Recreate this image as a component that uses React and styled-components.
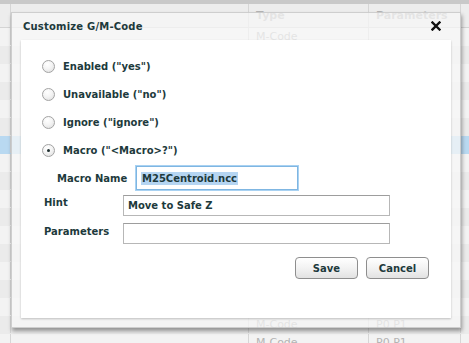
import React from "react";
import styled, { createGlobalStyle } from "styled-components";

const GlobalStyle = createGlobalStyle`
  html, body {
    margin: 0;
    padding: 0;
    width: 469px;
    height: 343px;
    overflow: hidden;
    background: #f2f2f2;
    font-family: "DejaVu Sans", Verdana, sans-serif;
  }
`;

const Page = styled.div`
  position: relative;
  width: 469px;
  height: 343px;
  overflow: hidden;
`;

const TopStrip = styled.div`
  height: 4px;
  background: #c9c9c9;
`;

const Row = styled.div`
  display: grid;
  grid-template-columns: 10px 238px 120px 92px 9px;
  height: ${({ $h }) => $h || 18}px;
  background: ${({ $bg }) => $bg};
  border-bottom: 1px solid ${({ $line }) => $line || "transparent"};
  box-sizing: border-box;
`;

const Cell = styled.div`
  border-left: 1px solid #d6d6d6;
  padding-left: 7px;
  display: flex;
  align-items: center;
  font-size: 11px;
  font-weight: ${({ $bold }) => ($bold ? 700 : 400)};
  color: #b4b4b4;
  white-space: nowrap;
  overflow: hidden;
  &:first-child {
    border-left: none;
  }
`;

const Overlay = styled.div`
  position: absolute;
  left: 11px;
  top: 12px;
  width: 450px;
  height: 316px;
  box-sizing: border-box;
  background: rgba(246, 246, 246, 0.72);
  border: 1px solid rgba(190, 190, 190, 0.7);
  box-shadow: 1px 3px 4px rgba(0, 0, 0, 0.38);
  display: flex;
  flex-direction: column;
  padding: 0 9px 9px 9px;
`;

const TitleBar = styled.div`
  height: 27px;
  display: flex;
  align-items: center;
  justify-content: space-between;
  padding: 0 10px 0 2px;
`;

const Title = styled.div`
  font-size: 10px;
  font-weight: 700;
  color: #1d3a3c;
  letter-spacing: 0.2px;
`;

const Close = styled.svg`
  width: 10px;
  height: 10px;
  margin-top: -2px;
`;

const Panel = styled.div`
  flex: 1;
  background: #fff;
  box-shadow: 0 1px 2px rgba(0, 0, 0, 0.22);
  padding: 19px 22px 0 21px;
  display: flex;
  flex-direction: column;
`;

const Choices = styled.div`
  display: flex;
  flex-direction: column;
  gap: 14px;
`;

const Choice = styled.div`
  display: flex;
  align-items: center;
  height: 14px;
  gap: 8px;
`;

const Radio = styled.span`
  width: 13px;
  height: 13px;
  box-sizing: border-box;
  border-radius: 50%;
  border: 1px solid #a3a3a3;
  background: radial-gradient(circle at 40% 30%, #ffffff 0%, #f4f4f4 45%, #dcdcdc 100%);
  display: flex;
  align-items: center;
  justify-content: center;
  &::after {
    content: "";
    width: 3px;
    height: 3px;
    border-radius: 50%;
    background: ${({ $checked }) => ($checked ? "#1f2f30" : "transparent")};
  }
`;

const Label = styled.span`
  font-size: 10px;
  font-weight: 700;
  color: #1d3a3c;
  white-space: nowrap;
`;

const FieldRow = styled.div`
  display: grid;
  grid-template-columns: 79px auto;
  align-items: ${({ $center }) => ($center ? "center" : "start")};
  margin-top: ${({ $mt }) => $mt}px;
  padding-left: ${({ $indent }) => $indent}px;
`;

const FieldLabel = styled(Label)`
  padding-top: ${({ $pt }) => $pt || 0}px;
`;

const Field = styled.div`
  width: ${({ $w }) => $w}px;
  height: ${({ $h }) => $h}px;
  box-sizing: border-box;
  border: 1px solid #b7b7b7;
  border-top-color: #9d9d9d;
  background: #fff;
  display: flex;
  align-items: center;
  padding-left: 4px;
  font-size: 10px;
  font-weight: 700;
  color: #1d3a3c;
`;

const FocusField = styled(Field)`
  border: 1px solid #7fb6e2;
  box-shadow: 0 0 0 1px #a9d2f2;
`;

const Selected = styled.span`
  background: #b5d5f2;
  line-height: 13px;
  padding: 0 1px;
`;

const Actions = styled.div`
  display: flex;
  justify-content: flex-end;
  gap: 8px;
  margin-top: 13px;
`;

const Button = styled.button`
  width: 63px;
  height: 22px;
  border: 1px solid #8e8e8e;
  border-radius: 4px;
  background: linear-gradient(#ffffff, #f1f1f1 55%, #e2e2e2);
  font-family: "DejaVu Sans", Verdana, sans-serif;
  font-size: 10px;
  font-weight: 700;
  color: #1d3a3c;
  padding: 0;
`;

const rows = [
  { bg: "#f3f3f3", type: "M-Code" },
  { bg: "#ebebeb" },
  { bg: "#f3f3f3" },
  { bg: "#ebebeb" },
  { bg: "#f3f3f3" },
  { bg: "#ebebeb" },
  { bg: "#b9d9f1" },
  { bg: "#f3f3f3" },
  { bg: "#ebebeb" },
  { bg: "#f3f3f3" },
  { bg: "#ebebeb" },
  { bg: "#f3f3f3" },
  { bg: "#ebebeb" },
  { bg: "#f3f3f3" },
  { bg: "#ebebeb" },
  { bg: "#f3f3f3" },
  { bg: "#ebebeb", type: "M-Code", params: "P0 P1" },
  { bg: "#f3f3f3", type: "M-Code", params: "P0 P1" },
];

const choices = [
  { label: 'Enabled ("yes")' },
  { label: 'Unavailable ("no")' },
  { label: 'Ignore ("ignore")' },
  { label: 'Macro ("<Macro>?")', checked: true },
];

export default function App() {
  return (
    <Page>
      <GlobalStyle />
      <TopStrip />
      <Row $h={24} $bg="#ededed" $line="#d4d4d4">
        <Cell />
        <Cell />
        <Cell $bold>Type</Cell>
        <Cell $bold>Parameters</Cell>
        <Cell />
      </Row>
      {rows.map((r, i) => (
        <Row key={i} $bg={r.bg}>
          <Cell />
          <Cell />
          <Cell>{r.type}</Cell>
          <Cell>{r.params}</Cell>
          <Cell />
        </Row>
      ))}

      <Overlay>
        <TitleBar>
          <Title>Customize G/M-Code</Title>
          <Close viewBox="0 0 10 10">
            <path d="M1.5 1.5 L8.5 8.5 M8.5 1.5 L1.5 8.5" stroke="#111" strokeWidth="2.4" strokeLinecap="square" />
          </Close>
        </TitleBar>
        <Panel>
          <Choices>
            {choices.map((c) => (
              <Choice key={c.label}>
                <Radio $checked={c.checked} />
                <Label>{c.label}</Label>
              </Choice>
            ))}
          </Choices>

          <FieldRow $mt={9} $indent={15} $center>
            <FieldLabel $pt={0}>Macro Name</FieldLabel>
            <FocusField $w={162} $h={24}>
              <Selected>M25Centroid.ncc</Selected>
            </FocusField>
          </FieldRow>
          <FieldRow $mt={5} $indent={2}>
            <FieldLabel $pt={2}>Hint</FieldLabel>
            <Field $w={267} $h={21}>Move to Safe Z</Field>
          </FieldRow>
          <FieldRow $mt={7} $indent={2}>
            <FieldLabel $pt={3}>Parameters</FieldLabel>
            <Field $w={267} $h={21} />
          </FieldRow>

          <Actions>
            <Button>Save</Button>
            <Button>Cancel</Button>
          </Actions>
        </Panel>
      </Overlay>
    </Page>
  );
}
